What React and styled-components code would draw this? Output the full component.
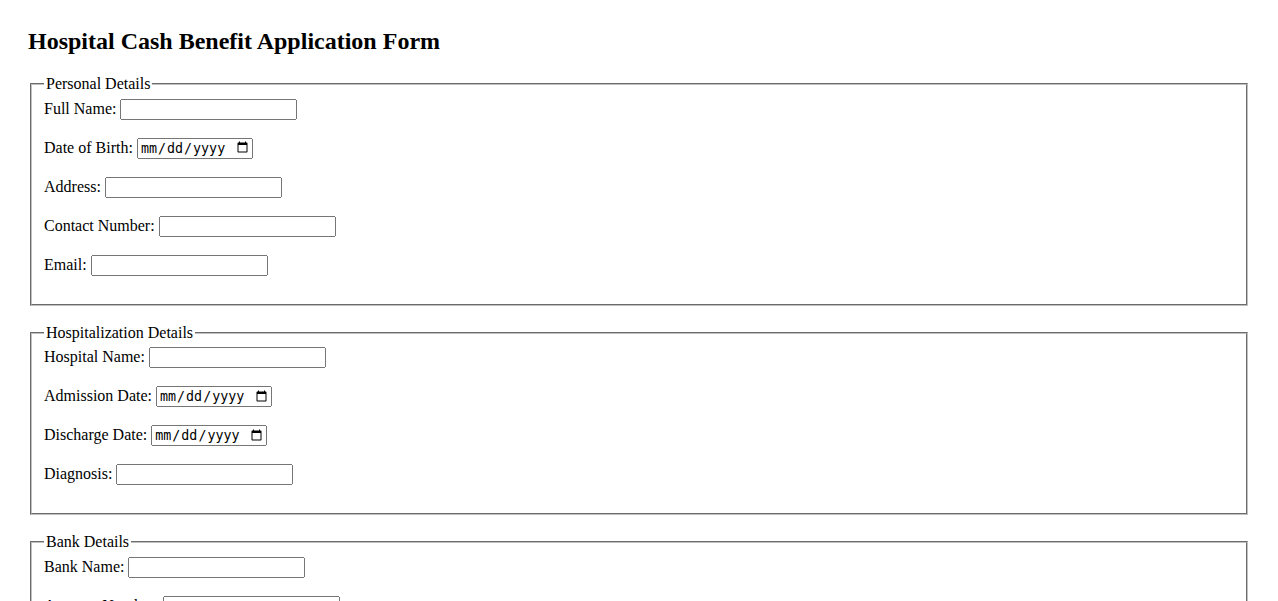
import React from "react";
import styled, { createGlobalStyle } from "styled-components";

const Global = createGlobalStyle`
  html, body { background: #fff; }
  body {
    margin: 8px;
    font-family: "Liberation Serif", "Times New Roman", serif;
    font-size: 16px;
    color: #000;
  }
`;

const Page = styled.div`
  padding: 20px;
`;

const Title = styled.h2`
  font-size: 24px;
  font-weight: bold;
  margin: 0 0 20px;
  line-height: normal;
`;

const Section = styled.fieldset`
  margin: 0 2px 18px;
  padding: 0.35em 0.75em 0.625em;
  border: 2px groove rgb(192, 192, 192);
`;

const Legend = styled.legend`
  padding: 0 2px;
`;

const Row = styled.div`
  margin-bottom: 18px;
`;

const Label = styled.label``;

const Field = styled.input`
  box-sizing: border-box;
  width: ${(p) => (p.type === "date" ? "116px" : "177px")};
  height: 21px;
  vertical-align: baseline;
`;

const sections = [
  {
    legend: "Personal Details",
    fields: [
      ["Full Name:", "text"],
      ["Date of Birth:", "date"],
      ["Address:", "text"],
      ["Contact Number:", "tel"],
      ["Email:", "email"],
    ],
  },
  {
    legend: "Hospitalization Details",
    fields: [
      ["Hospital Name:", "text"],
      ["Admission Date:", "date"],
      ["Discharge Date:", "date"],
      ["Diagnosis:", "text"],
    ],
  },
  {
    legend: "Bank Details",
    fields: [
      ["Bank Name:", "text"],
      ["Account Number:", "text"],
      ["IFSC Code:", "text"],
    ],
  },
];

export default function App() {
  return (
    <>
      <Global />
      <Page>
        <Title>Hospital Cash Benefit Application Form</Title>
        <form>
          {sections.map((s, si) => (
            <Section key={s.legend}>
              <Legend>{s.legend}</Legend>
              {s.fields.map(([label, type], fi) => {
                const id = `f-${si}-${fi}`;
                return (
                  <Row key={id}>
                    <Label htmlFor={id}>{label}</Label> <Field id={id} type={type} />
                  </Row>
                );
              })}
            </Section>
          ))}
        </form>
      </Page>
    </>
  );
}
